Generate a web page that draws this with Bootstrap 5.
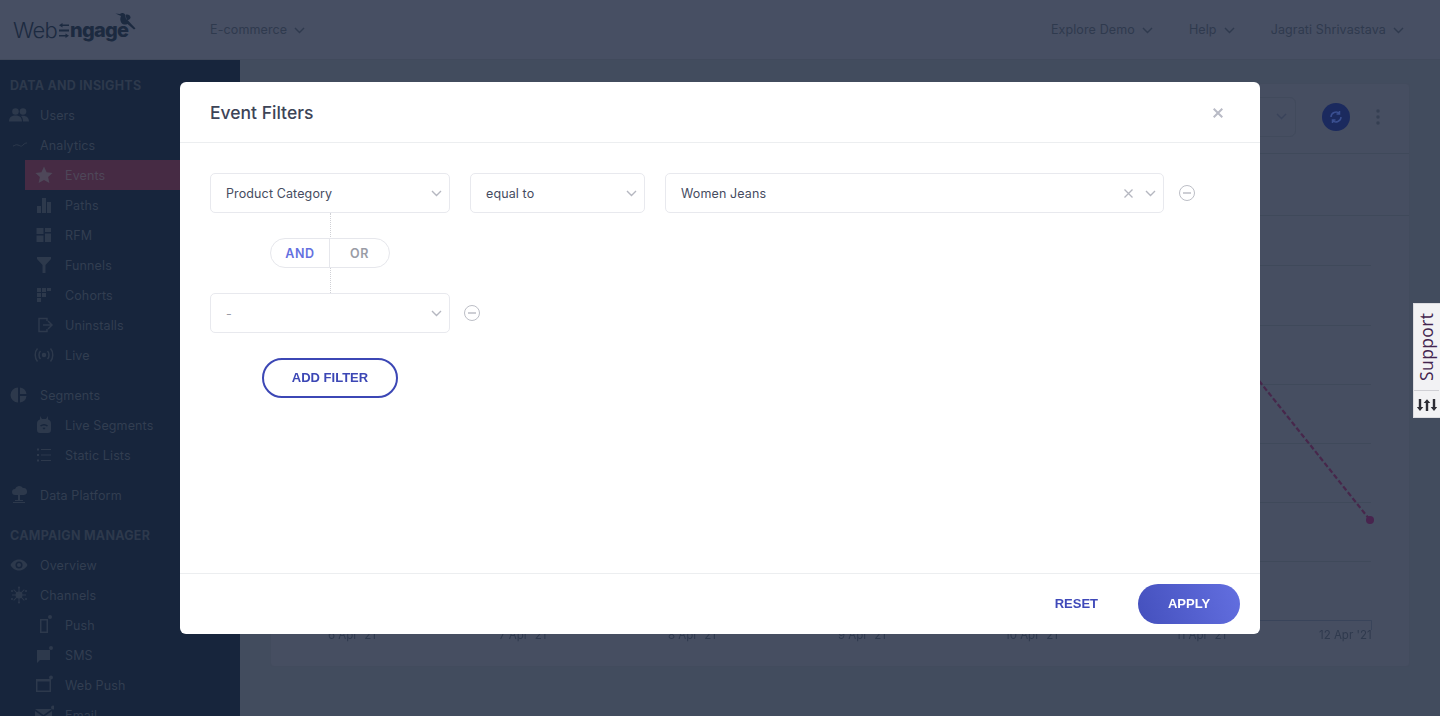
<!doctype html>
<html lang="en"><head><meta charset="utf-8"><title>Event Filters</title>
<link href="https://cdn.jsdelivr.net/npm/bootstrap@5.3.0/dist/css/bootstrap.min.css" rel="stylesheet">
<style>
html,body{height:716px;overflow:hidden}
body{font-family:Inter,"Liberation Sans",sans-serif;font-size:12.5px;background:#424c5e;color:#2f3a4e;letter-spacing:.12px}
.we-top{height:60px;background:#474f63;border-bottom:1px solid #414a5c;padding:0 36px 0 13px}
.we-logo{font-size:22px;line-height:1;color:#1c2a40;letter-spacing:-.7px;width:197px;position:relative;display:flex;align-items:center;padding-bottom:0}
.we-logo b{font-weight:800;font-size:20px;letter-spacing:-.8px}
.we-logo .we-bird{position:absolute;left:102px;top:-7px}
.we-logo .we-arrows{margin:1px 1px 0 2px}
.we-menu{gap:36px;color:#2f3a4e}
.we-nav{padding-top:1px}
.we-chev{width:11px;height:7px;margin-left:7px}
.we-main{height:656px}
.we-side{width:240px;background:#17253c;color:#323e51;flex:none;overflow:hidden;padding-top:10px}
.we-head{height:30px;line-height:32px;padding-left:10px;font-weight:700;color:#2d394c;letter-spacing:.25px}
.we-item{height:30px;padding-left:40px;position:relative;line-height:32px}
.we-sub{margin-left:25px;padding-left:40px}
.we-active{background:#462b44;color:#4e4759}
.we-active .we-ic{fill:#4e4759}
.we-gap{margin-top:10px}
.we-ic{position:absolute;top:5px;left:9px;width:20px;height:20px;fill:#2d394c;stroke:none}
.we-content{flex:1;padding:23px 30px 0;min-width:0}
.we-panel{height:584px;background:#464e61;border:1px solid #424b5d;border-radius:4px;position:relative;overflow:hidden}
.we-ph{height:70px;border-bottom:1px solid #3f495a;padding:0 29px 4px 0;gap:26px}
.we-select{width:60px;height:40px;border:1px solid #414a5c;border-radius:6px}
.we-refresh{width:28px;height:28px;border-radius:50%;background:#1b2a5e}
.we-sub2{height:62px;border-bottom:1px solid #3f495a}
.we-chart{display:block}
.we-modal{position:fixed;left:180px;top:82px;width:1080px;height:552px;margin:0;background:#fff;border:0;border-radius:6px;color:#464c5f;z-index:10}
.we-mhead{height:61px;padding:1px 30px 0;border-bottom:1px solid #eceef0}
.we-title{font-size:17.5px;font-weight:500;letter-spacing:0;margin:0;line-height:1;color:#3d4457}
.we-close{background:none;border:0;padding:0;line-height:0;margin-right:7px}
.we-mbody{padding:30px;flex:1}
.we-field{height:40px;border:1px solid #e8e9ee;border-radius:5px;padding:0 7px 0 15px;background:#fff;color:#464c5f;flex:none}
.we-ftext{padding-top:2px}
.we-w1{width:240px}.we-w2{width:175px}.we-w3{width:499px}
.we-rowgap{gap:20px}
.we-minus{width:16px;height:16px;margin-left:15px;flex:none}
.we-minus2{margin-left:14px}
.we-chevb{margin-left:12px}
.we-conn{width:240px;height:80px;position:relative}
.we-conn::before{content:"";position:absolute;left:120px;top:0;bottom:0;border-left:1px dotted #d0d1d6}
.we-toggle{position:absolute;left:60px;top:25px;width:120px;height:30px;border:1px solid #e6e7ec;border-radius:15px;background:#fff;font-weight:600;font-size:12.5px;letter-spacing:.6px;overflow:hidden}
.we-toggle span{text-align:center;line-height:30px}
.we-and{color:#6470e0;border-right:1px solid #e6e7ec;width:59px;flex:none}
.we-or{color:#9a9ca6;flex:1}
.we-add{margin:25px 0 0 52px;width:136px;height:40px;border:2px solid #3c47b5;border-radius:20px;background:#fff;color:#3c47b5;font:700 13px "Liberation Sans",sans-serif;letter-spacing:0;padding:0 0 2px;display:block}
.we-mfoot{height:61px;padding:0 20px;border-top:1px solid #eceef0;gap:40px}
.we-reset{background:none;border:0;padding:0 0 2px;color:#3f49b9;font:700 13px "Liberation Sans",sans-serif}
.we-apply{width:102px;height:40px;border:0;border-radius:20px;padding:0 0 2px;color:#fff;background:linear-gradient(70deg,#4450bd,#636fe0);font:700 13px "Liberation Sans",sans-serif}
.we-support{position:fixed;right:0;top:303px;width:27px;height:115px;background:#f2f2f4;border:1px solid #dcdce0;border-right:0;color:#43254f;z-index:20}
.we-stext{height:87px;writing-mode:vertical-rl;transform:rotate(180deg);font:17.500px/25px "Open Sans",sans-serif;letter-spacing:.4px;text-align:left;padding-top:9px;border-top:1px solid #cfcfd4}
.we-sic{height:27px}
.we-xlab{position:fixed;top:628px;font-size:11.5px;line-height:14px;letter-spacing:0;color:#2f3a4e;white-space:nowrap;z-index:1}
</style></head>
<body>
<nav class="we-top d-flex align-items-center">
  <div class="we-logo"><span style="font-weight:300">Web</span><svg class="we-arrows" width="10" height="15" viewBox="0 0 10 15" fill="#1c2a40" role="img" aria-label="E"><path d="M3.500 0L0 2.200l3.500 2.200V3h6.500V1.400H3.500zM0 6.600h10v1.800H0zM6.500 10.600l3.500 2.200-3.500 2.200v-1.400H0v-1.600h6.500z"/></svg><b>ngage</b>
    <svg class="we-bird" width="22" height="18" viewBox="0 0 22 18" fill="#1c2a40"><path d="M.5 1.500L5 2c1.500-1.500 4-1.200 5 .5l1 4.500c3 2 6 6 9.500 9.500l-1.500 1-6.500-5.500c-2 1-4.500.7-6-1-1.500-2-1.500-5-.5-7z"/><path d="M10.500 3c2-1 5 0 5 2.500 0 1.500-2 2.500-3.500 3z"/></svg>
  </div>
  <div class="we-nav d-flex align-items-center">E-commerce<svg class="we-chev" viewBox="0 0 11 7" fill="none" stroke="#2f3a4e" stroke-width="1.4"><path d="M1 1l4.500 4.500L10 1"/></svg></div>
  <div class="we-menu we-nav d-flex ms-auto">
    <div class="d-flex align-items-center">Explore Demo<svg class="we-chev" viewBox="0 0 11 7" fill="none" stroke="#2f3a4e" stroke-width="1.4"><path d="M1 1l4.500 4.500L10 1"/></svg></div>
    <div class="d-flex align-items-center">Help<svg class="we-chev" viewBox="0 0 11 7" fill="none" stroke="#2f3a4e" stroke-width="1.4"><path d="M1 1l4.500 4.500L10 1"/></svg></div>
    <div class="d-flex align-items-center">Jagrati Shrivastava<svg class="we-chev" viewBox="0 0 11 7" fill="none" stroke="#2f3a4e" stroke-width="1.4"><path d="M1 1l4.500 4.500L10 1"/></svg></div>
  </div>
</nav>
<div class="we-main d-flex">
  <aside class="we-side">
    <div class="we-head">DATA AND INSIGHTS</div>
    <div class="we-item"><svg class="we-ic" viewBox="0 0 20 20"><circle cx="6.500" cy="6.500" r="3.300"/><circle cx="14" cy="6.500" r="3.300"/><path d="M0 16.500c0-4.500 3-6 6.500-6s6.500 1.500 6.500 6zM14 16.500c0-2.500-.5-4-2-5.500 4-1.200 8 .8 8 5.500z"/></svg>Users</div>
    <div class="we-item"><svg class="we-ic" viewBox="0 0 20 20" style="fill:none;stroke:#2d394c"><path d="M4 11c2 0 2-2 5-1s3 2 5 0 3-2 4-2"/></svg>Analytics</div>
    <div class="we-item we-sub we-active"><svg class="we-ic" viewBox="0 0 20 20"><path d="M10 1.500l2.600 5.700 6 .7-4.500 4.100 1.300 6L10 15l-5.400 3 1.300-6L1.400 7.900l6-.7z"/></svg>Events</div>
    <div class="we-item we-sub"><svg class="we-ic" viewBox="0 0 20 20"><path d="M3 11h4v7H3zM8 3h4v15H8zM13 7h4v11h-4z"/></svg>Paths</div>
    <div class="we-item we-sub"><svg class="we-ic" viewBox="0 0 20 20"><path d="M2.500 3h7v6h-7zM11 3h6v4h-6zM11 8.500h6V17h-6zM2.500 10.500h7V17h-7z"/></svg>RFM</div>
    <div class="we-item we-sub"><svg class="we-ic" viewBox="0 0 20 20"><path d="M3 2h14v2l-5.500 6v8h-3v-8L3 4z"/></svg>Funnels</div>
    <div class="we-item we-sub"><svg class="we-ic" viewBox="0 0 20 20"><path d="M3 3h4v4H3zM8 3h4v4H8zM13 3h4v3h-4zM3 8h4v4H3zM8 8h4v4H8zM3 13h4v4H3z"/></svg>Cohorts</div>
    <div class="we-item we-sub"><svg class="we-ic" viewBox="0 0 20 20" style="fill:none;stroke:#2d394c;stroke-width:1.500"><path d="M13 6V3.500H5v13h8V14M9 10h9M14 6l4 4-4 4"/></svg>Uninstalls</div>
    <div class="we-item we-sub"><svg class="we-ic" viewBox="0 0 20 20" style="fill:none;stroke:#2d394c;stroke-width:1.500"><circle cx="10" cy="10" r="1.500" fill="#2d394c"/><path d="M6.500 6c-2 2-2 6 0 8M13.500 6c2 2 2 6 0 8M3.500 3.500c-3 3-3 10 0 13M16.500 3.500c3 3 3 10 0 13"/></svg>Live</div>
    <div class="we-item we-gap"><svg class="we-ic" viewBox="0 0 20 20"><path d="M9 2.500v15a7.500 7.500 0 010-15zM11 2.500A7.500 7.500 0 0117.500 9H11zM11 11h6.500A7.500 7.500 0 0111 17.500z"/></svg>Segments</div>
    <div class="we-item we-sub"><svg class="we-ic" viewBox="0 0 20 20"><path fill-rule="evenodd" d="M6 1l2 3h4l2-3v3.500c2 .5 3 2 3 4V15c0 2-1 3-3 3H6c-2 0-3-1-3-3V8.500c0-2 1-3.500 3-4zM6 10.500l1 1c2-1.500 4-1.500 6 0l1-1c-2.500-2-5.500-2-8 0zM8.500 13l1.500 1.500 1.500-1.500c-1-.7-2-.7-3 0z"/></svg>Live Segments</div>
    <div class="we-item we-sub"><svg class="we-ic" viewBox="0 0 20 20"><path d="M3 3.500h2v2H3zM7 4h10v1H7zM3 9h2v2H3zM7 9.500h10v1H7zM3 14.500h2v2H3zM7 15h10v1H7z"/></svg>Static Lists</div>
    <div class="we-item we-gap"><svg class="we-ic" viewBox="0 0 20 20"><path d="M6 10a3 3 0 010-6 4.500 4.500 0 018-1 3.500 3.500 0 011 7zM9 10h2v5h3v1H6v-1h3zM4 17h12v1H4z"/></svg>Data Platform</div>
    <div class="we-head we-gap">CAMPAIGN MANAGER</div>
    <div class="we-item"><svg class="we-ic" viewBox="0 0 20 20"><path fill-rule="evenodd" d="M1.500 10c2-4 5.500-5.500 8.500-5.500s6.500 1.500 8.500 5.500c-2 4-5.500 5.500-8.500 5.500S3.500 14 1.500 10zm8.500 3.500a3.500 3.500 0 100-7 3.500 3.500 0 000 7z"/><circle cx="10" cy="10" r="2"/></svg>Overview</div>
    <div class="we-item"><svg class="we-ic" viewBox="0 0 20 20"><circle cx="10" cy="10" r="3.500"/><path d="M9.500 3h1v14h-1zM3 9.500h14v1H3zM5 4.300L15.700 15l-.7.700L4.300 5zM15 4.300l.7.700L5 15.700l-.7-.7z"/><circle cx="10" cy="2.500" r="1"/><circle cx="10" cy="17.500" r="1"/><circle cx="3" cy="6" r="1"/><circle cx="17" cy="6" r="1"/><circle cx="3" cy="14" r="1"/><circle cx="17" cy="14" r="1"/></svg>Channels</div>
    <div class="we-item we-sub"><svg class="we-ic" viewBox="0 0 20 20"><path fill-rule="evenodd" d="M6 4h8v14H6zm1.500 1.500v11h5v-11z"/><circle cx="16" cy="2" r="2"/></svg>Push</div>
    <div class="we-item we-sub"><svg class="we-ic" viewBox="0 0 20 20"><path d="M3 5h13v10H6l-3 3z"/><circle cx="17" cy="3" r="2"/></svg>SMS</div>
    <div class="we-item we-sub"><svg class="we-ic" viewBox="0 0 20 20"><path fill-rule="evenodd" d="M2 4h15v13H2zm1.500 2.500v9h12v-9z"/><circle cx="17" cy="2.500" r="2"/></svg>Web Push</div>
    <div class="we-item we-sub"><svg class="we-ic" viewBox="0 0 20 20"><path d="M1 4h17l-8.500 6zM1 6l8.500 6L18 6v11H1z"/><circle cx="19" cy="2.500" r="2"/></svg>Email</div>
  </aside>
  <main class="we-content">
    <section class="we-panel">
      <div class="we-ph d-flex align-items-center justify-content-end">
        <div class="we-select d-flex align-items-center justify-content-end pe-2"><svg width="11" height="7" viewBox="0 0 11 7" fill="none" stroke="#39435a" stroke-width="1.400"><path d="M1 1l4.500 4.500L10 1"/></svg></div>
        <div class="we-refresh d-flex align-items-center justify-content-center"><svg width="14" height="14" viewBox="0 0 14 14" fill="none" stroke="#3a4f90" stroke-width="1.500"><path d="M2 7a5 5 0 018.500-3.500M12 7a5 5 0 01-8.500 3.500M10.500 1v3h-3M3.500 13v-3h3"/></svg></div>
        <svg width="4" height="16" viewBox="0 0 4 16" fill="#353f52"><circle cx="2" cy="2" r="1.700"/><circle cx="2" cy="8" r="1.700"/><circle cx="2" cy="14" r="1.700"/></svg>
      </div>
      <div class="we-sub2"></div>
      <svg class="we-chart" width="1138" height="450" viewBox="0 0 1138 450" fill="none">
        <g stroke="#3f495a"><path d="M40 49.500H1100M40 109.500H1100M40 168.500H1100M40 227.500H1100M40 286.500H1100M40 345.500H1100"/><path d="M40 404.500H1100.500V414" stroke="#39445a"/></g>
        <path d="M960 129.600L1099 304" stroke="#47274b" stroke-width="2.200" stroke-dasharray="5 2.500"/>
        <circle cx="1099" cy="304" r="4" fill="#48244e"/>
      </svg>
    </section>
  </main>
</div>
<span class="we-xlab" style="left:328px">6 Apr '21</span><span class="we-xlab" style="left:499px">7 Apr '21</span><span class="we-xlab" style="left:668px">8 Apr '21</span><span class="we-xlab" style="left:838px">9 Apr '21</span><span class="we-xlab" style="left:1005px">10 Apr '21</span><span class="we-xlab" style="left:1176px">11 Apr '21</span><span class="we-xlab" style="left:1319px">12 Apr '21</span>

<div class="modal-dialog we-modal d-flex flex-column">
  <div class="we-mhead d-flex align-items-center justify-content-between">
    <h5 class="we-title">Event Filters</h5>
    <button class="we-close" aria-label="Close"><svg width="10" height="10" viewBox="0 0 10 10" stroke="#b9bbc6" stroke-width="2"><path d="M.7.700l8.600 8.600M9.300.700L.7 9.300"/></svg></button>
  </div>
  <div class="we-mbody">
    <div class="d-flex align-items-center we-rowgap">
      <div class="we-field we-w1 d-flex align-items-center justify-content-between"><span class="we-ftext">Product Category</span><svg width="11" height="7" viewBox="0 0 11 7" fill="none" stroke="#b5b7c0" stroke-width="1.400"><path d="M1 1l4.500 4.500L10 1"/></svg></div>
      <div class="we-field we-w2 d-flex align-items-center justify-content-between"><span class="we-ftext">equal to</span><svg width="11" height="7" viewBox="0 0 11 7" fill="none" stroke="#b5b7c0" stroke-width="1.400"><path d="M1 1l4.500 4.500L10 1"/></svg></div>
      <div class="d-flex align-items-center">
        <div class="we-field we-w3 d-flex align-items-center"><span class="we-ftext">Women Jeans</span>
          <svg class="ms-auto" width="9" height="9" viewBox="0 0 9 9" stroke="#b5b7c0" stroke-width="1.300"><path d="M.5.500l8 8M8.500.500l-8 8"/></svg>
          <svg class="we-chevb" width="11" height="7" viewBox="0 0 11 7" fill="none" stroke="#b5b7c0" stroke-width="1.400"><path d="M1 1l4.500 4.500L10 1"/></svg>
        </div>
        <svg class="we-minus" viewBox="0 0 16 16" fill="none" stroke="#bcbec6"><circle cx="8" cy="8" r="7.500"/><path d="M4 8h8" stroke-width="1.500"/></svg>
      </div>
    </div>
    <div class="we-conn"><div class="we-toggle d-flex"><span class="we-and">AND</span><span class="we-or">OR</span></div></div>
    <div class="d-flex align-items-center">
      <div class="we-field we-w1 d-flex align-items-center justify-content-between" style="color:#9a9ca6"><span class="we-ftext">-</span><svg width="11" height="7" viewBox="0 0 11 7" fill="none" stroke="#b5b7c0" stroke-width="1.400"><path d="M1 1l4.500 4.500L10 1"/></svg></div>
      <svg class="we-minus we-minus2" viewBox="0 0 16 16" fill="none" stroke="#bcbec6"><circle cx="8" cy="8" r="7.500"/><path d="M4 8h8" stroke-width="1.500"/></svg>
    </div>
    <button class="we-add">ADD FILTER</button>
  </div>
  <div class="we-mfoot d-flex align-items-center justify-content-end">
    <button class="we-reset">RESET</button>
    <button class="we-apply">APPLY</button>
  </div>
</div>
<aside class="we-support">
  <div class="we-stext">Support</div>
  <div class="we-sic d-flex align-items-center justify-content-center"><svg width="20" height="12" viewBox="0 0 20 12" fill="#2c2c34"><path d="M1.800 0h2.400v8H6.300l-3.300 4L-.3 8h2.100zM8.800 4H6.700L10 .2 13.300 4h-2.100v8H8.800zM15.800 0h2.400v8h2.100L17 12l-3.300-4h2.100z"/></svg></div>
</aside>
<script src="https://cdn.jsdelivr.net/npm/bootstrap@5.3.0/dist/js/bootstrap.bundle.min.js"></script>
</body></html>
